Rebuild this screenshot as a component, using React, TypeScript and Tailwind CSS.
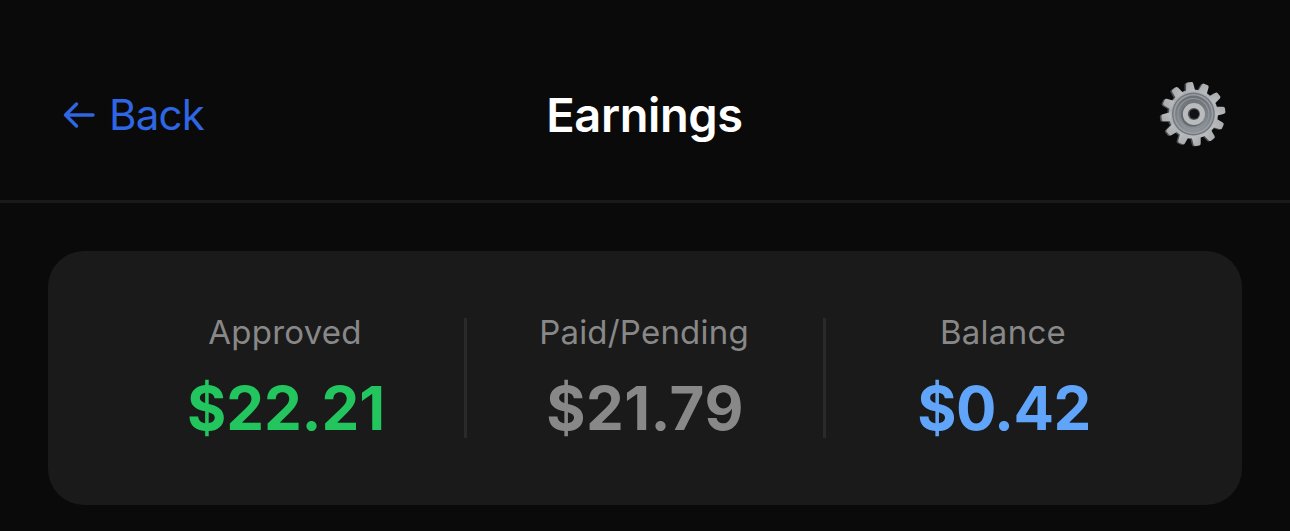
import { Fragment } from "react";

const stats = [
  { label: "Approved", value: "$22.21", color: "text-[#22c55e]", labelSpacing: "tracking-[0.25px]", valueSpacing: "tracking-[-0.1px]" },
  { label: "Paid/Pending", value: "$21.79", color: "text-[#888888]", labelSpacing: "tracking-[0.2px]", valueSpacing: "tracking-[0.5px]" },
  { label: "Balance", value: "$0.42", color: "text-[#60a5fa]", labelSpacing: "tracking-[0.25px]", valueSpacing: "tracking-[-0.6px]" },
];

const teeth = Array.from({ length: 12 }, (_, i) => i * 30 - 7);

function GearShape({ fill }: { fill: string }) {
  return (
    <g fill={fill}>
      <circle r="24.6" />
      {teeth.map((angle) => (
        <path key={angle} d="M-4.6 -22.5 L-3.6 -30.4 Q-3.3 -32 -2 -32 L2 -32 Q3.3 -32 3.6 -30.4 L4.6 -22.5 Z" transform={`rotate(${angle})`} />
      ))}
    </g>
  );
}

function Gear() {
  return (
    <svg className="-mt-[2px]" width="68" height="68" viewBox="-34 -34 68 68" aria-hidden="true">
      <defs>
        <linearGradient id="face" x1="0" y1="0" x2="1" y2="1">
          <stop offset="0" stopColor="#a5a9ac" />
          <stop offset="1" stopColor="#bcbec0" />
        </linearGradient>
        <linearGradient id="dish" x1="0" y1="0" x2="0" y2="1">
          <stop offset="0" stopColor="#6b7076" />
          <stop offset="1" stopColor="#8d9298" />
        </linearGradient>
      </defs>
      <g transform="translate(-1.2 0.5)"><GearShape fill="#4c4d50" /></g>
      <g transform="translate(0.4 0)">
        <GearShape fill="url(#face)" />
        <circle r="21.4" fill="#73787e" />
        <circle r="20" fill="#9a9ea3" />
        <circle r="18.4" fill="url(#dish)" />
        <circle r="15.5" fill="none" stroke="#90959b" strokeWidth="1.2" />
        <circle cx="-0.6" cy="0.8" r="11.8" fill="#62676d" />
        <circle cx="0.5" r="11.1" fill="#b9bbbd" />
        <circle cx="0.5" r="6.1" fill="#50555b" />
        <circle cx="0.8" r="4.8" fill="#101214" />
      </g>
    </svg>
  );
}

export default function App() {
  return (
    <div className="flex h-[531px] w-[1290px] flex-col overflow-hidden bg-[#0a0a0a] font-['Inter',sans-serif]">
      <header className="flex h-[203px] shrink-0 items-center justify-between border-b-[3px] border-[#1a1a1a] pr-[63px] pl-[62px] pt-[30px]">
        <button className="flex w-[200px] items-center text-[#2f66e3]">
          <svg width="34" height="30" viewBox="0 0 34 30" fill="none" stroke="currentColor" strokeWidth="3.4" strokeLinecap="round" strokeLinejoin="round">
            <path d="M31 15H3.5M14.5 4L3.5 15L14.5 26" />
          </svg>
          <span className="ml-[13px] text-[42px] leading-[50px] tracking-[-0.8px]">Back</span>
        </button>
        <h1 className="text-[47px] leading-[58px] font-semibold tracking-[-0.4px] text-white">Earnings</h1>
        <div className="flex w-[200px] justify-end"><Gear /></div>
      </header>
      <main className="px-12 pt-12">
        <section className="flex h-[254px] items-center rounded-[36px] bg-[#1a1a1a] px-[60px]">
          {stats.map((s, i) => (
            <Fragment key={s.label}>
              {i > 0 && <div className="h-[120px] w-[3px] shrink-0 bg-[#2a2a2a]" />}
              <div className="flex flex-1 flex-col items-center">
                <span className={`mr-[2px] text-[33px] leading-[40px] text-[#888888] ${s.labelSpacing}`}>{s.label}</span>
                <span className={`mt-[20px] text-[60px] leading-[72px] font-bold ${s.color} ${s.valueSpacing}`}>{s.value}</span>
              </div>
            </Fragment>
          ))}
        </section>
      </main>
    </div>
  );
}
